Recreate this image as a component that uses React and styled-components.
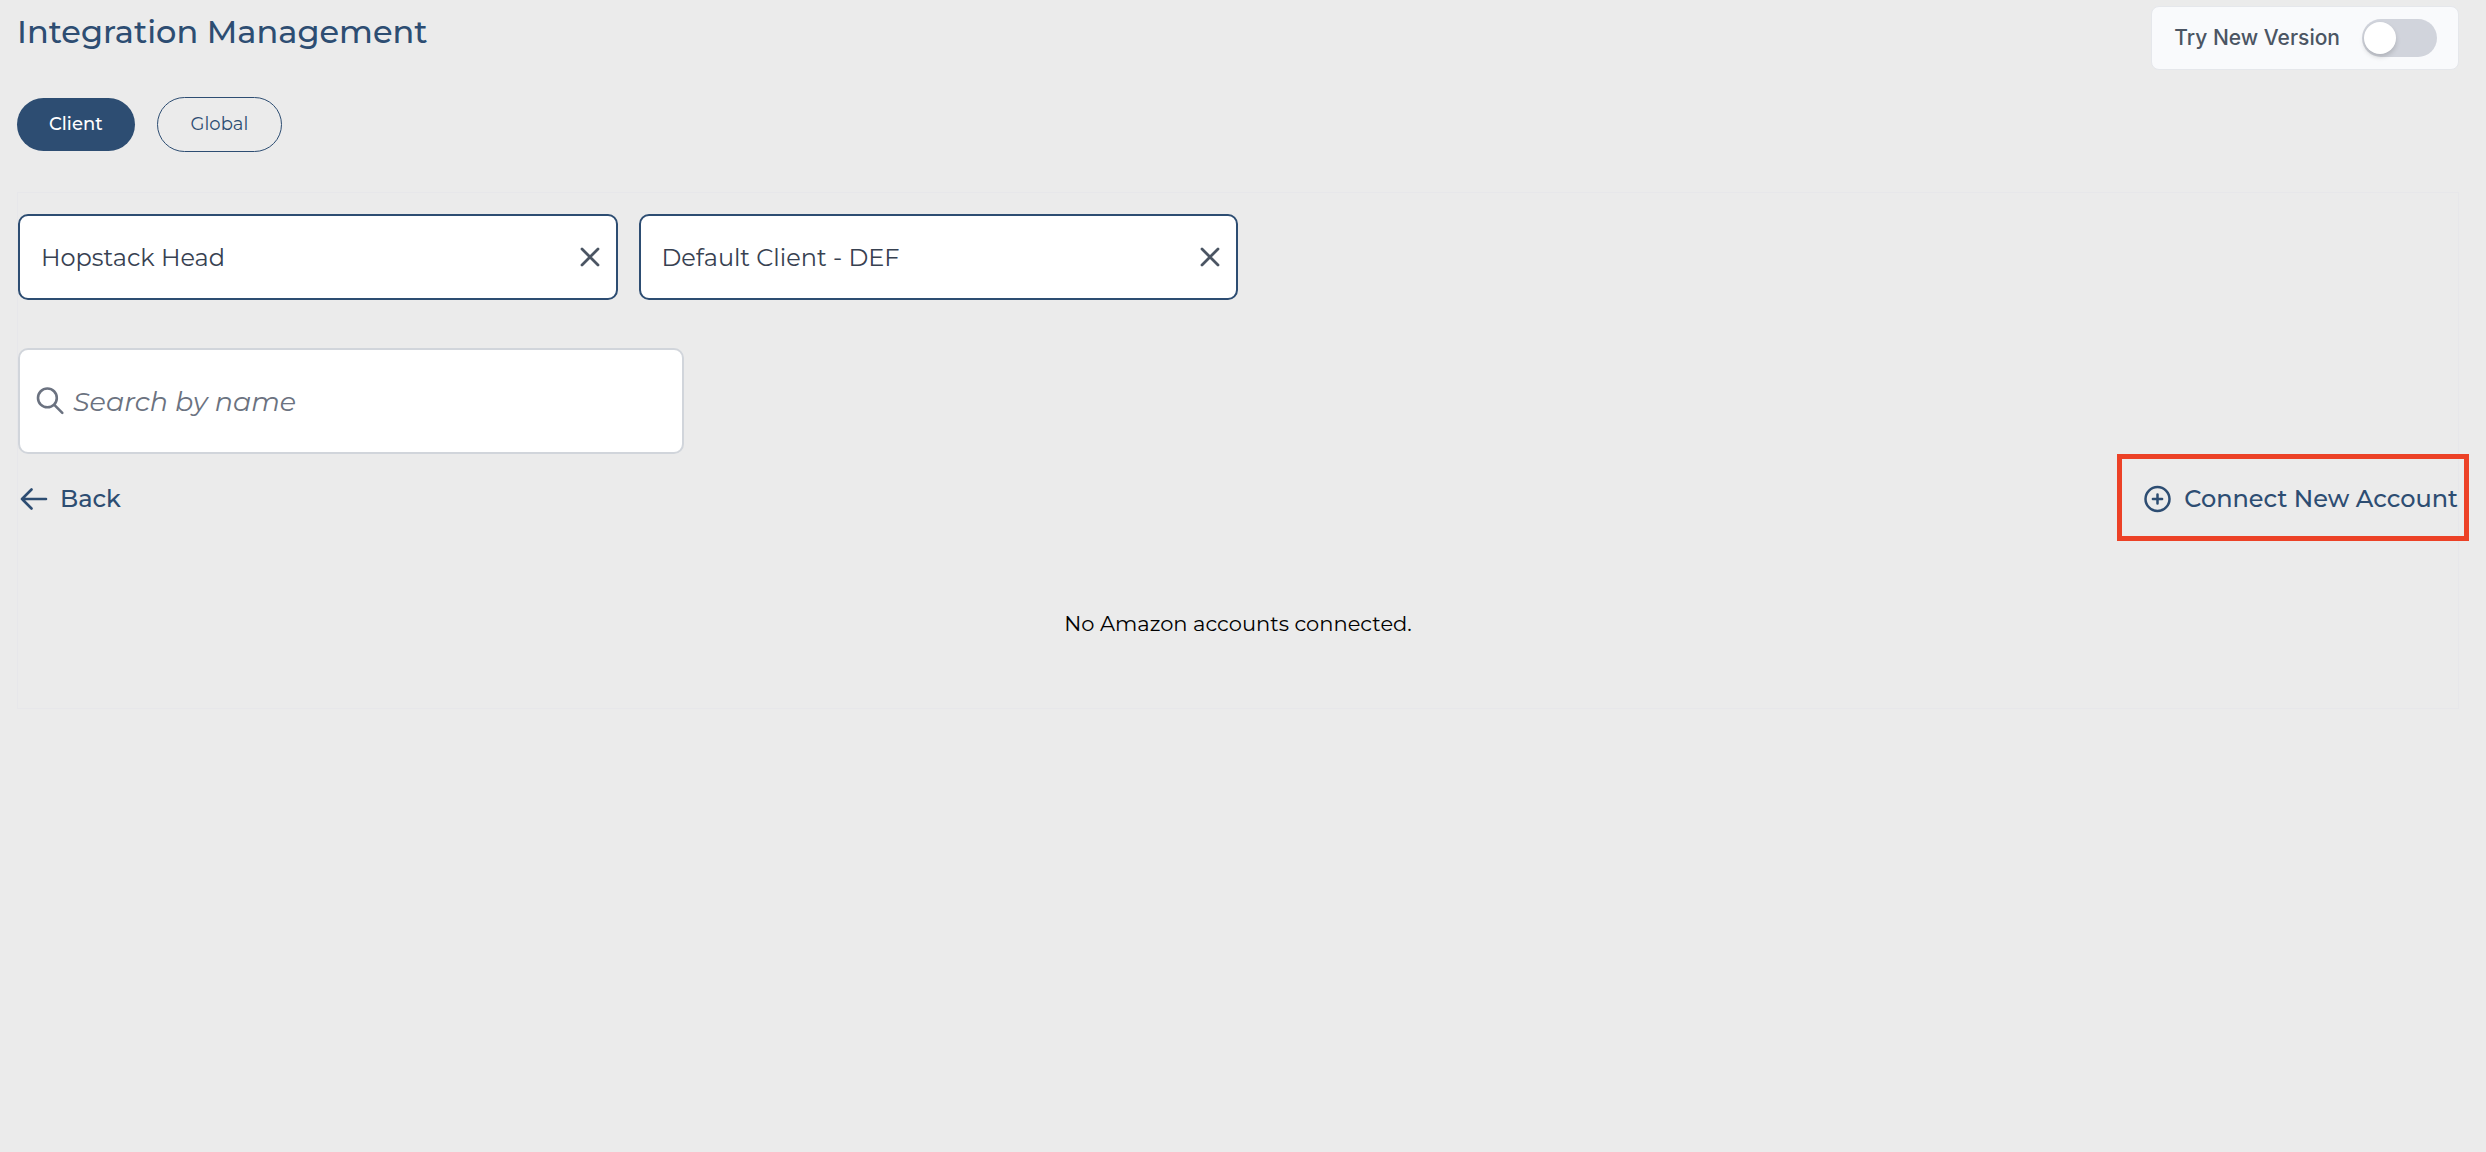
import React, { useState } from "react";
import styled, { createGlobalStyle } from "styled-components";

const navy = "#2d4d72";

const GlobalStyle = createGlobalStyle`
  *, *::before, *::after { box-sizing: border-box; }
  body {
    margin: 0;
    background: #ebebeb;
    color: #111;
    font-family: Montserrat, Inter, "Liberation Sans", sans-serif;
  }
  button, input { font: inherit; }
  button { cursor: pointer; }
`;

const Page = styled.main`
  min-height: 100vh;
  padding: 6px 27px 40px 17px;
`;

const Header = styled.header`
  display: flex;
  justify-content: space-between;
  align-items: flex-start;
`;

const Title = styled.h1`
  margin: 0;
  padding-top: 6px;
  font-size: 32px;
  line-height: 40px;
  font-weight: 500;
  color: ${navy};
`;

const VersionCard = styled.label`
  display: flex;
  align-items: center;
  gap: 22px;
  padding: 12px 21px 12px 22px;
  border: 1px solid #e5e7eb;
  border-radius: 8px;
  background: #f9fafc;
  color: #4b5563;
  font-family: Inter, sans-serif;
  font-size: 21px;
  line-height: 32px;
  font-weight: 500;
`;

const Toggle = styled.input`
  appearance: none;
  display: flex;
  align-items: center;
  width: 75px;
  height: 38px;
  margin: 0;
  padding: 0 2px;
  border-radius: 19px;
  background: #d1d4dc;
  cursor: pointer;

  &::before {
    content: "";
    width: 32px;
    height: 32px;
    border-radius: 50%;
    background: #fff;
    box-shadow: 0 3px 5px rgba(0, 0, 0, 0.16);
  }

  &:checked {
    justify-content: flex-end;
    background: ${navy};
  }
`;

const Tabs = styled.nav`
  display: flex;
  align-items: center;
  gap: 22px;
  margin: 27px 0 40px;
`;

const Tab = styled.button`
  padding: ${(p) => (p.$active ? "12px 32px" : "12px 33px")};
  border: ${(p) => (p.$active ? "none" : `1px solid ${navy}`)};
  border-radius: 28px;
  background: ${(p) => (p.$active ? navy : "transparent")};
  color: ${(p) => (p.$active ? "#fff" : navy)};
  font-size: 18px;
  line-height: 29px;
  font-weight: ${(p) => (p.$active ? 500 : 400)};
`;

const Panel = styled.section`
  padding: 21px 0 66px;
  border: 1px solid #e7e7ea;
`;

const Filters = styled.div`
  display: grid;
  grid-template-columns: 1fr 1fr;
  gap: 21px;
  width: 50%;
`;

const FilterField = styled.div`
  display: flex;
  align-items: center;
  padding: 22px 14px 22px 21px;
  border: 2px solid ${navy};
  border-radius: 10px;
  background: #fff;
`;

const FieldInput = styled.input`
  flex: 1;
  min-width: 0;
  height: 38px;
  padding: 0;
  border: 0;
  outline: 0;
  background: transparent;
  color: #374151;
  font-size: 24px;
`;

const ClearButton = styled.button`
  display: flex;
  padding: 0;
  border: 0;
  background: none;
  color: #4b5563;
`;

const SearchField = styled.div`
  display: flex;
  align-items: center;
  gap: 7px;
  width: 666px;
  max-width: 100%;
  margin-top: 48px;
  padding: 31px 16px;
  border: 2px solid #d1d5db;
  border-radius: 10px;
  background: #fff;
  color: #6b7280;
`;

const SearchInput = styled(FieldInput)`
  height: 40px;
  font-size: 27px;

  &::placeholder {
    color: #6b7280;
    font-style: italic;
    opacity: 1;
  }
`;

const Actions = styled.div`
  display: flex;
  justify-content: space-between;
  align-items: center;
  margin-top: 28px;
`;

const Action = styled.button`
  position: relative;
  display: flex;
  align-items: center;
  gap: 12px;
  padding: 0;
  border: 0;
  background: none;
  color: ${navy};
  font-size: 24px;
  line-height: 34px;
  font-weight: 500;
`;

const Highlight = styled.span`
  position: absolute;
  inset: -28px -11px -25px -25px;
  border: 5px solid #ec4126;
  pointer-events: none;
`;

const Empty = styled.p`
  margin: 90px 0 0;
  text-align: center;
  color: #000;
  font-size: 21px;
  line-height: 36px;
`;

const CrossIcon = () => (
  <svg width="24" height="24" viewBox="0 0 24 24" fill="none" stroke="currentColor" strokeWidth="2.8" strokeLinecap="round" aria-hidden="true">
    <path d="M4 4l16 16M20 4L4 20" />
  </svg>
);

const SearchIcon = () => (
  <svg width="30" height="30" viewBox="0 0 30 30" fill="none" stroke="currentColor" strokeWidth="2.6" strokeLinecap="round" aria-hidden="true">
    <circle cx="11.4" cy="11.9" r="9.4" />
    <path d="M18.3 18.8l8 8" />
  </svg>
);

const BackIcon = () => (
  <svg width="30" height="30" viewBox="0 0 30 30" fill="none" stroke="currentColor" strokeWidth="2.6" strokeLinecap="round" strokeLinejoin="round" aria-hidden="true">
    <path d="M13.5 5.5L4 15l9.5 9.5M4 15h24" />
  </svg>
);

const PlusIcon = () => (
  <svg width="30" height="30" viewBox="0 0 30 30" fill="none" stroke="currentColor" strokeWidth="2.5" strokeLinecap="round" aria-hidden="true">
    <circle cx="15.5" cy="15" r="12" />
    <path d="M15.5 10.4v9.2M10.9 15h9.2" />
  </svg>
);

function Filter({ label, initial }) {
  const [value, setValue] = useState(initial);
  return (
    <FilterField>
      <FieldInput aria-label={label} value={value} onChange={(e) => setValue(e.target.value)} />
      <ClearButton type="button" aria-label={`Clear ${label}`} onClick={() => setValue("")}>
        <CrossIcon />
      </ClearButton>
    </FilterField>
  );
}

export default function App() {
  const [tab, setTab] = useState("Client");
  return (
    <Page>
      <GlobalStyle />
      <Header>
        <Title>Integration Management</Title>
        <VersionCard>
          Try New Version
          <Toggle type="checkbox" role="switch" />
        </VersionCard>
      </Header>
      <Tabs>
        {["Client", "Global"].map((name) => (
          <Tab key={name} type="button" $active={tab === name} onClick={() => setTab(name)}>
            {name}
          </Tab>
        ))}
      </Tabs>
      <Panel>
        <Filters>
          <Filter label="Warehouse" initial="Hopstack Head" />
          <Filter label="Client" initial="Default Client - DEF" />
        </Filters>
        <SearchField>
          <SearchIcon />
          <SearchInput type="text" aria-label="Search by name" placeholder="Search by name" />
        </SearchField>
        <Actions>
          <Action type="button">
            <BackIcon />
            Back
          </Action>
          <Action type="button">
            <PlusIcon />
            Connect New Account
            <Highlight />
          </Action>
        </Actions>
        <Empty>No Amazon accounts connected.</Empty>
      </Panel>
    </Page>
  );
}
